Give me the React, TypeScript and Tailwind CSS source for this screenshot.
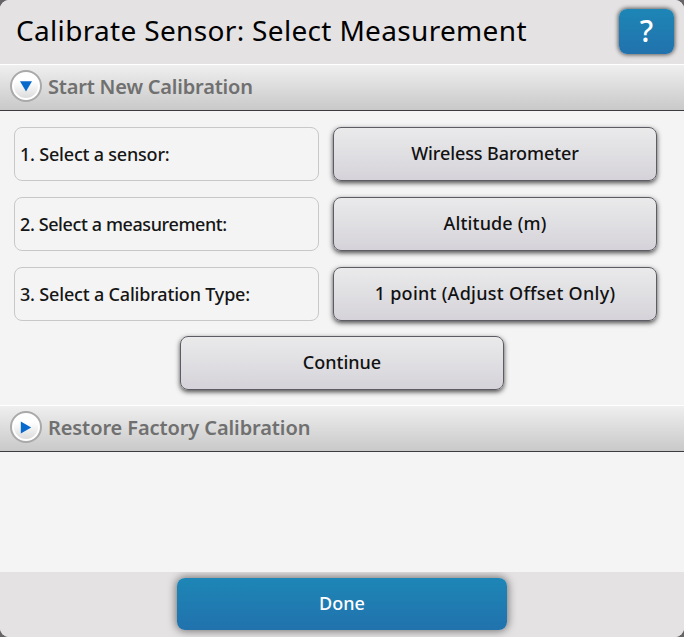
import React, { useState } from 'react';

interface SectionHeaderProps {
  title: string;
  isOpen: boolean;
  titleClass: string;
  onToggle: () => void;
}

interface CalibrationStep {
  label: string;
  labelClass: string;
  value: string;
  valueClass: string;
}

const steps: CalibrationStep[] = [
  {
    label: '1. Select a sensor:',
    labelClass: 'tracking-[-0.2px]',
    value: 'Wireless Barometer',
    valueClass: 'tracking-[-0.1px]',
  },
  {
    label: '2. Select a measurement:',
    labelClass: 'tracking-[-0.4px]',
    value: 'Altitude (m)',
    valueClass: 'tracking-[0.15px]',
  },
  {
    label: '3. Select a Calibration Type:',
    labelClass: 'tracking-[-0.18px]',
    value: '1 point (Adjust Offset Only)',
    valueClass: 'tracking-[0.28px]',
  },
];

const grayButton =
  'h-[54px] w-[324px] shrink-0 rounded-[8px] border border-[#5d5b63] bg-linear-to-b from-[#eaeaeb] to-[#d5d3d9] pb-[2px] text-center text-[18px] font-medium text-[#111] shadow-[0_2px_5px_rgba(0,0,0,0.7)]';

const SectionHeader: React.FC<SectionHeaderProps> = ({ title, isOpen, titleClass, onToggle }) => (
  <button
    onClick={onToggle}
    className="flex h-[47px] w-full items-center border-t border-b border-t-white border-b-[#3d3b3f] bg-linear-to-b from-[#efefef] to-[#c9c9c9] pb-[2px] pl-[10px] text-left"
  >
    <svg className="mb-[1px] shrink-0" width="32" height="32" viewBox="0 0 32 32">
      <defs>
        <linearGradient id="knob" x1="0" y1="0" x2="0" y2="1">
          <stop offset="0.3" stopColor="#ffffff" />
          <stop offset="1" stopColor="#dcdcdc" />
        </linearGradient>
      </defs>
      <circle cx="16" cy="16" r="15" fill="#ffffff" stroke="#a9a9a9" strokeWidth="2" />
      <circle cx="16" cy="16" r="12" fill="url(#knob)" />
      {isOpen ? (
        <path d="M10 11.2H22L16 21.6Z" fill="#0869cc" />
      ) : (
        <path d="M10.8 10.6L21.2 16.6L10.8 22.6Z" fill="#0869cc" />
      )}
    </svg>
    <span className={`ml-[6px] text-[20px] leading-[24px] font-semibold whitespace-nowrap text-[#707070] ${titleClass}`}>
      {title}
    </span>
  </button>
);

const App: React.FC = () => {
  const [newOpen, setNewOpen] = useState(true);
  const [restoreOpen, setRestoreOpen] = useState(false);

  return (
    <div className="h-[637px] w-[684px] overflow-hidden bg-[#666467] font-['Noto_Sans',sans-serif]">
      <div className="flex h-full flex-col overflow-hidden rounded-[9px] bg-[#f4f4f4]">
        {/* Title bar */}
        <div className="flex h-[64px] shrink-0 items-start justify-between bg-[#e4e2e3] pt-[9px] pr-[10px] pl-[16px]">
          <h1 className="mt-[3px] text-[28px] leading-[36px] tracking-[0.33px] whitespace-nowrap text-black">
            Calibrate Sensor: Select Measurement
          </h1>
          <button className="h-[45px] w-[55px] rounded-[8px] bg-linear-to-b from-[#1d86b6] to-[#2172ad] pb-[2px] text-[30px] leading-[43px] font-medium text-white shadow-[0_0_4px_1px_rgba(0,0,0,0.6)]">
            ?
          </button>
        </div>

        <SectionHeader
          title="Start New Calibration"
          isOpen={newOpen}
          titleClass="tracking-[-0.2px]"
          onToggle={() => setNewOpen(!newOpen)}
        />
        {newOpen && (
          <div className="flex h-[294px] shrink-0 flex-col items-center gap-4 pt-4">
            {steps.map(step => (
              <div key={step.label} className="flex w-full gap-[14px] pl-[14px]">
                <div className="flex h-[54px] w-[305px] items-center rounded-[8px] border border-[#c8c8c8] pl-[5px] text-[18px] font-medium text-[#161616]">
                  <span className={`whitespace-nowrap ${step.labelClass}`}>{step.label}</span>
                </div>
                <button className={grayButton}>
                  <span className={`whitespace-nowrap ${step.valueClass}`}>{step.value}</span>
                </button>
              </div>
            ))}
            <button className={`-mt-px ${grayButton}`}>Continue</button>
          </div>
        )}

        <SectionHeader
          title="Restore Factory Calibration"
          isOpen={restoreOpen}
          titleClass="tracking-[-0.1px]"
          onToggle={() => setRestoreOpen(!restoreOpen)}
        />
        <div className="flex-1" />

        {/* Footer */}
        <div className="flex h-[65px] shrink-0 justify-center overflow-hidden bg-[#e4e2e3] pt-[6px]">
          <button className="h-[52px] w-[330px] rounded-[8px] bg-linear-to-b from-[#1d86b6] to-[#2172ad] pb-[2px] text-[18px] font-medium text-white shadow-[0_0_8px_1px_rgba(0,0,0,0.5)]">
            Done
          </button>
        </div>
      </div>
    </div>
  );
};

export default App;
